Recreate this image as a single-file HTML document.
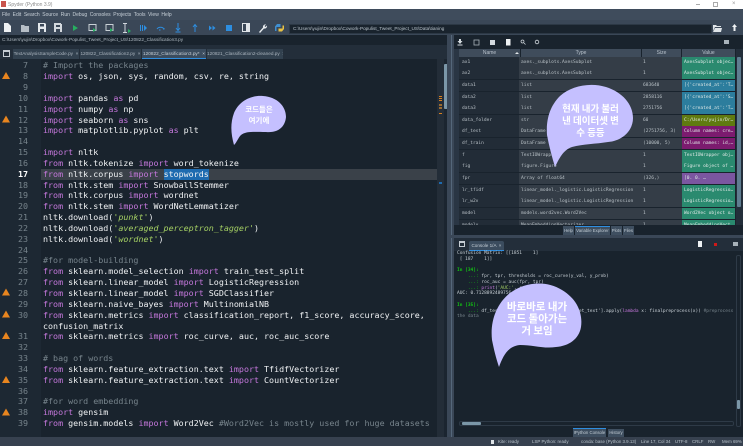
<!DOCTYPE html>
<html><head><meta charset="utf-8">
<style>
html,body{margin:0;padding:0;width:743px;height:446px;overflow:hidden;background:#37414f}
body{position:relative;font-family:"Liberation Sans","Noto Sans CJK KR",sans-serif;filter:blur(.3px)}
.a{position:absolute}
pre{margin:0;font-family:"DejaVu Sans Mono",monospace}
#code{position:absolute;left:43px;top:60.3px;font-size:8.35px;line-height:10.85px;color:#f0f2f4;white-space:pre}
#nums{position:absolute;left:10px;width:18px;top:60.3px;font-size:8.35px;line-height:10.85px;color:#77848c;text-align:right}
i.k{font-style:normal;color:#c678dd}
i.c{font-style:normal;color:#77848c}
i.s{color:#a4cf63}
.ui{position:absolute;font-size:5.2px;color:#c8d0d8;white-space:nowrap;line-height:8px}
.tab{position:absolute;top:49px;height:10px;background:#32414f;color:#aab4be;font-size:4.7px;line-height:10px;white-space:nowrap;text-align:center;overflow:hidden}
.row{position:absolute;left:459px;width:276px;height:11px;font-family:"DejaVu Sans Mono",monospace;font-size:4.55px;line-height:11px;color:#b8c0c6;background:#343d47}
.row span{position:absolute;top:0;white-space:nowrap;overflow:hidden;height:11px}
.n{left:0;width:60px;background:#222c37;padding-left:3px;box-sizing:border-box}
.t{left:62px;width:120px}
.z{left:184px}
.v{left:223px;width:53px;padding-left:2px;box-sizing:border-box;color:#dfe8e6}
.hd{position:absolute;top:49px;height:8px;background:#3f4c5b;color:#b8c2cc;font-size:5px;line-height:8px;text-align:center}
.con{position:absolute;left:457px;font-family:"DejaVu Sans Mono",monospace;font-size:4.5px;line-height:6px;color:#c8d0d6;white-space:pre}
.bt{position:absolute;height:9px;background:#3f4f60;color:#c2ccd4;font-size:4.3px;line-height:9px;text-align:center;white-space:nowrap;overflow:hidden}
.kr{position:absolute;color:#fff;font-weight:bold;text-align:center;white-space:nowrap;font-family:"Noto Sans CJK KR",sans-serif}
.st{position:absolute;top:438px;color:#b8c2ca;font-size:4.4px;line-height:8px;white-space:nowrap}
</style></head><body>

<!-- title bar -->
<div class="a" style="left:0;top:0;width:743px;height:9px;background:#fff"></div>
<div class="a" style="left:1px;top:1px;width:5px;height:6px;background:#c9544c"></div>
<div class="ui" style="left:8px;top:1px;color:#8c8c8c;font-size:5px">Spyder (Python 3.9)</div>
<div class="a" style="left:696px;top:4px;width:4px;height:1px;background:#aaa"></div>
<div class="a" style="left:713px;top:2px;width:3px;height:3px;border:1px solid #aaa"></div>
<div class="ui" style="left:732px;top:0;color:#999;font-size:6px">×</div>

<!-- menu -->
<div class="a" style="left:0;top:9px;width:743px;height:11px;background:#3f4c5c"></div>
<div class="ui" style="left:2px;top:11px;word-spacing:1.2px;color:#c8d0d8;font-size:5px">File Edit Search Source Run Debug Consoles Projects Tools View Help</div>

<!-- toolbar -->
<div class="a" style="left:0;top:20px;width:743px;height:15px;background:#3a4757"></div>
<svg class="a" style="left:0;top:20px" width="290" height="15" viewBox="0 0 290 15">
<path d="M4 3h4l3 3v6H4z" fill="#eef1f3"/>
<path d="M21 5h3l1 1h4v6h-8z" fill="#b6bec6"/>
<path d="M38 3h7l1 1v8h-8z" fill="#e4e8ec"/><rect x="40" y="4" width="4" height="2.5" fill="#3a4757"/><rect x="40" y="9" width="4" height="3" fill="#3a4757"/>
<path d="M54 3h7v1h1v8h-8z" fill="#d4d9de"/><rect x="56" y="5" width="4" height="2" fill="#3a4757"/><rect x="56" y="9" width="4" height="3" fill="#3a4757"/>
<path d="M73 5l5 3-5 3z" fill="#27ae60"/>
<rect x="89" y="4.5" width="7" height="6" fill="none" stroke="#c8d0d6" stroke-width="1"/><path d="M93 8l3 2-3 2z" fill="#27ae60"/>
<rect x="106" y="4.5" width="7" height="6" fill="none" stroke="#c8d0d6" stroke-width="1"/><path d="M110 8l3 2-3 2z" fill="#27ae60"/>
<path d="M123 3.500h4M125 3.500v9M123 12.500h4" stroke="#d0d6dc" fill="none"/><path d="M128 9l3 2-3 2z" fill="#27ae60"/>
<rect x="140" y="5" width="1" height="6" fill="#2d8ee0"/><rect x="142" y="5" width="1" height="6" fill="#2d8ee0"/><path d="M144 5l3 3-3 3z" fill="#2d8ee0"/>
<path d="M157 9a4 3.500 0 0 1 7 0" stroke="#2d8ee0" fill="none"/><path d="M163 10l2-1-1-1z" fill="#2d8ee0"/><rect x="159" y="9.500" width="1.500" height="1" fill="#2d8ee0"/>
<path d="M178 3v7M176 8l2 2.500 2-2.500M175.500 12h5" stroke="#2d8ee0" fill="none"/>
<path d="M195 12V5M193 7l2-2.500 2 2.500" stroke="#2d8ee0" fill="none"/>
<path d="M209 5.500l3 2.500-3 2.500zM212.500 5.500l3 2.500-3 2.500z" fill="#2d8ee0"/>
<rect x="226" y="5" width="6" height="6" fill="#2d8ee0"/>
<rect x="242" y="3" width="8" height="9" fill="#e0e4e8"/><rect x="243" y="4" width="3" height="7" fill="#3a4757"/>
<path d="M259 12l4-4.500a2.500 2.500 0 0 1 3-3l-1.500 1.500 1 1 1.500-1.500a2.500 2.500 0 0 1-3 3l-4 4.500z" fill="#e8ecef"/>
<path d="M277 4h3.500v3h-4v4h-1.500V6.500z" fill="#3f8fd0"/><path d="M282 11.500h-3.500v-3h4v-3h1.500V9z" fill="#e8c244"/>
</svg>
<div class="a" style="left:289px;top:24px;width:421px;height:8px;background:#19232d;border:1px solid #2c3845;box-sizing:content-box"></div>
<div class="ui" style="left:293px;top:24.500px;color:#b8c2ca;font-size:4.7px">C:\Users\yujin\Dropbox\Cowork-Populist_Tweet_Project_US\Data\tianing</div>
<svg class="a" style="left:712px;top:22px" width="30" height="12" viewBox="0 0 30 12">
<path d="M1 3h3l1 1h4v1H3L1 9zM3 6h7l-1 4H1z" fill="#dfe4e8"/>
<path d="M21.500 9V5H20l2.500-3L25 5h-1.500v4z" fill="#eef1f3"/>
</svg>

<!-- file path -->
<div class="a" style="left:0;top:35px;width:447px;height:9.500px;background:#19232d"></div>
<div class="ui" style="left:2px;top:36px;color:#aeb8c0;font-size:4.7px">C:\Users\yujin\Dropbox\Cowork-Populist_Tweet_Project_US\120822_Classification3.py</div>

<!-- tab bar -->
<div class="a" style="left:0;top:44.500px;width:447px;height:14px;background:#232e3a"></div>
<div class="a" style="left:3px;top:50px;width:5px;height:4px;border:1px solid #c5ccd3;border-top-width:2px"></div>
<div class="tab" style="left:13px;width:66px">TextAnalysisSampleCode.py &nbsp;×</div>
<div class="tab" style="left:80px;width:61px">120822_Classification2.py &nbsp;×</div>
<div class="tab" style="left:142px;width:64px;background:#3b4c5e;border-bottom:1px solid #2f8ee0;height:9px;color:#c5ced6">120822_Classification3.py* &nbsp;×</div>
<div class="tab" style="left:207px;width:76px">120821_Classification2-cleaned.py &nbsp;×</div>

<!-- editor -->
<div class="a" style="left:0;top:59px;width:447px;height:378px;background:#19232d"></div>
<div class="a" style="left:0;top:59px;width:41px;height:378px;background:#1d2833"></div>
<div class="a" style="left:41px;top:168.700px;width:396px;height:11.300px;background:#3a4149"></div>
<div class="a" style="left:163.500px;top:169px;width:45px;height:11px;background:#1e6bb0"></div>
<div class="a" style="left:437px;top:59px;width:10px;height:378px;background:#232d38"></div>
<div class="a" style="left:444px;top:59px;width:3px;height:378px;background:#1b2530"></div>
<div class="a" style="left:444px;top:64px;width:4px;height:45px;background:#7b97a8;border-radius:1px"></div>
<div class="a" style="left:439px;top:96px;width:3px;height:1px;background:#d9801f"></div>
<div class="a" style="left:439px;top:98px;width:3px;height:1px;background:#d9801f"></div>
<div class="a" style="left:439px;top:100px;width:3px;height:1px;background:#d9801f"></div>
<div class="a" style="left:439px;top:104px;width:3px;height:2px;background:#9a6a30"></div>
<div class="a" style="left:439px;top:107px;width:3px;height:2px;background:#9a6a30"></div>
<div class="a" style="left:439px;top:113px;width:3px;height:1px;background:#d9801f"></div>
<div class="a" style="left:439px;top:182px;width:3px;height:2px;background:#1e6bb0"></div>

<pre id="nums">7
8
9
10
11
12
13
14
15
16
<b style="color:#fff">17</b>
18
19
20
21
22
23
24
25
26
27
28
29
30

31
32
33
34
35
36
37
38
39</pre>

<svg class="a" style="left:0;top:59px" width="12" height="378" viewBox="0 0 12 378" fill="#e8851f">
<path d="M6 13l4 7H2z"/><path d="M6 56.500l4 7H2z"/><path d="M6 229.500l4 7H2z"/><path d="M6 251.500l4 7H2z"/><path d="M6 273l4 7H2z"/><path d="M6 317l4 7H2z"/><path d="M6 349.500l4 7H2z"/>
</svg>

<pre id="code"><i class="c"># Import the packages</i>
<i class="k">import</i> os, json, sys, random, csv, re, string

<i class="k">import</i> pandas <i class="k">as</i> pd
<i class="k">import</i> numpy <i class="k">as</i> np
<i class="k">import</i> seaborn <i class="k">as</i> sns
<i class="k">import</i> matplotlib.pyplot <i class="k">as</i> plt

<i class="k">import</i> nltk
<i class="k">from</i> nltk.tokenize <i class="k">import</i> word_tokenize
<i class="k">from</i> nltk.corpus <i class="k">import</i> stopwords
<i class="k">from</i> nltk.stem <i class="k">import</i> SnowballStemmer
<i class="k">from</i> nltk.corpus <i class="k">import</i> wordnet
<i class="k">from</i> nltk.stem <i class="k">import</i> WordNetLemmatizer
nltk.download(<i class="s">'punkt'</i>)
nltk.download(<i class="s">'averaged_perceptron_tagger'</i>)
nltk.download(<i class="s">'wordnet'</i>)

<i class="c">#for model-building</i>
<i class="k">from</i> sklearn.model_selection <i class="k">import</i> train_test_split
<i class="k">from</i> sklearn.linear_model <i class="k">import</i> LogisticRegression
<i class="k">from</i> sklearn.linear_model <i class="k">import</i> SGDClassifier
<i class="k">from</i> sklearn.naive_bayes <i class="k">import</i> MultinomialNB
<i class="k">from</i> sklearn.metrics <i class="k">import</i> classification_report, f1_score, accuracy_score,
confusion_matrix
<i class="k">from</i> sklearn.metrics <i class="k">import</i> roc_curve, auc, roc_auc_score

<i class="c"># bag of words</i>
<i class="k">from</i> sklearn.feature_extraction.text <i class="k">import</i> TfidfVectorizer
<i class="k">from</i> sklearn.feature_extraction.text <i class="k">import</i> CountVectorizer

<i class="c">#for word embedding</i>
<i class="k">import</i> gensim
<i class="k">from</i> gensim.models <i class="k">import</i> Word2Vec <i class="c">#Word2Vec is mostly used for huge datasets</i></pre>

<!-- right column gutter -->
<div class="a" style="left:447px;top:35px;width:7px;height:402px;background:#3a4757"></div>
<div class="a" style="left:451px;top:35px;width:1px;height:402px;background:#55677a"></div>
<div class="a" style="left:447px;top:235px;width:296px;height:3px;background:#3a4757"></div>

<!-- variable explorer -->
<div class="a" style="left:454px;top:35px;width:289px;height:200px;background:#19232d"></div>
<svg class="a" style="left:454px;top:37px" width="289" height="10" viewBox="0 0 289 10" fill="#d4dadf">
<path d="M5 2h2v2h1.500L6 7 3.500 4H5zM3.500 7.500h5v1h-5z"/>
<rect x="20" y="3" width="5" height="5" fill="none" stroke="#a8b2ba" stroke-width=".8"/>
<rect x="36" y="3" width="5" height="5"/>
<rect x="52" y="2" width="4.500" height="6.500" fill="#eef1f3"/>
<circle cx="68.500" cy="4.500" r="1.500" fill="none" stroke="#d4dadf" stroke-width=".7"/><path d="M70 6l1.500 1.500" stroke="#d4dadf" stroke-width=".7"/>
<circle cx="83" cy="5" r="1.800" fill="none" stroke="#d4dadf" stroke-width=".8"/>
<rect x="270" y="3" width="5" height="4" fill="#a8b2ba"/>
</svg>

<div class="a" style="left:454px;top:49px;width:5px;height:177px;background:#2a3644"></div>
<div class="hd" style="left:459px;width:61px">Name</div>
<div class="hd" style="left:521px;width:120px">Type</div>
<div class="hd" style="left:642px;width:39px">Size</div>
<div class="hd" style="left:682px;width:53px">Value</div>
<div class="a" style="left:515px;top:52px;width:0;height:0;border:2px solid transparent;border-bottom:2px solid #dfe4e8;border-top:0"></div>

<div class="row" style="top:56.500px"><span class="n">ax1</span><span class="t">axes._subplots.AxesSubplot</span><span class="z">1</span><span class="v" style="background:#2a8a6f">AxesSubplot objec…</span></div>
<div class="row" style="top:68.200px"><span class="n">ax2</span><span class="t">axes._subplots.AxesSubplot</span><span class="z">1</span><span class="v" style="background:#2a8a6f">AxesSubplot objec…</span></div>
<div class="row" style="top:79.800px"><span class="n">data1</span><span class="t">list</span><span class="z">683640</span><span class="v" style="background:#2c7d9d">[{'created_at':'T…</span></div>
<div class="row" style="top:91.500px"><span class="n">data2</span><span class="t">list</span><span class="z">2858116</span><span class="v" style="background:#2c7d9d">[{'created_at':'S…</span></div>
<div class="row" style="top:103.100px"><span class="n">data3</span><span class="t">list</span><span class="z">2751756</span><span class="v" style="background:#2c7d9d">[{'created_at':'T…</span></div>
<div class="row" style="top:114.800px"><span class="n">data_folder</span><span class="t">str</span><span class="z">60</span><span class="v" style="background:#5f7a10">C:/Users/yujin/Dr…</span></div>
<div class="row" style="top:126.400px"><span class="n">df_test</span><span class="t">DataFrame</span><span class="z">(2751756, 3)</span><span class="v" style="background:#7c1b6f">Column names: cre…</span></div>
<div class="row" style="top:138.100px"><span class="n">df_train</span><span class="t">DataFrame</span><span class="z">(10000, 5)</span><span class="v" style="background:#7c1b6f">Column names: id,…</span></div>
<div class="row" style="top:149.700px"><span class="n">f</span><span class="t">TextIOWrapper</span><span class="z">1</span><span class="v" style="background:#2a8a6f">TextIOWrapper obj…</span></div>
<div class="row" style="top:161.400px"><span class="n">fig</span><span class="t">figure.Figure</span><span class="z">1</span><span class="v" style="background:#2a8a6f">Figure object of …</span></div>
<div class="row" style="top:173px"><span class="n">fpr</span><span class="t">Array of float64</span><span class="z">(326,)</span><span class="v" style="background:#7b56a0">[0.        0.    …</span></div>
<div class="row" style="top:184.700px"><span class="n">lr_tfidf</span><span class="t">linear_model._logistic.LogisticRegression</span><span class="z">1</span><span class="v" style="background:#2a8a6f">LogisticRegressio…</span></div>
<div class="row" style="top:196.300px"><span class="n">lr_w2v</span><span class="t">linear_model._logistic.LogisticRegression</span><span class="z">1</span><span class="v" style="background:#2a8a6f">LogisticRegressio…</span></div>
<div class="row" style="top:208px"><span class="n">model</span><span class="t">models.word2vec.Word2Vec</span><span class="z">1</span><span class="v" style="background:#2a8a6f">Word2Vec object o…</span></div>
<div class="row" style="top:219.600px;height:5.500px;overflow:hidden"><span class="n">modelv</span><span class="t">MeanEmbeddingVectorizer</span><span class="z">1</span><span class="v" style="background:#2a8a6f">MeanEmbeddingVect…</span></div>

<div class="a" style="left:736px;top:49px;width:7px;height:176px;background:#232e3a"></div>
<div class="a" style="left:737px;top:57px;width:4px;height:150px;background:#5f7d90;border-radius:1px"></div>

<div class="a" style="left:454px;top:225px;width:289px;height:10px;background:#19232d"></div>
<div class="bt" style="left:563px;top:226px;width:11px">Help</div>
<div class="bt" style="left:575px;top:226px;width:35px;border-top:1px solid #2f8ee0;height:8px;line-height:8px">Variable Explorer</div>
<div class="bt" style="left:611px;top:226px;width:11px">Plots</div>
<div class="bt" style="left:623px;top:226px;width:11px">Files</div>

<!-- console -->
<div class="a" style="left:454px;top:238px;width:289px;height:199px;background:#19232d"></div>
<div class="a" style="left:454px;top:238px;width:289px;height:13px;background:#232e3a"></div>
<div class="a" style="left:459px;top:241px;width:4px;height:3px;border:1px solid #c5ccd3;border-top-width:2px"></div>
<div class="a" style="left:469px;top:241px;width:35px;height:9px;background:#3b4c5e;border-bottom:1px solid #2f8ee0;border-radius:2px 2px 0 0;color:#c5ced6;font-size:4.6px;line-height:9px;text-align:center">Console 1/A &nbsp;×</div>
<div class="a" style="left:698px;top:241px;width:4px;height:6px;background:#eef1f3"></div>
<div class="a" style="left:714px;top:243px;width:3px;height:3px;background:#d01818"></div>
<div class="a" style="left:733px;top:242px;width:5px;height:4px;background:#a8b2ba"></div>

<div class="con" style="top:251px">Confusion Matrix: [[1851    1]</div>
<div class="con" style="top:257px"> [ 187    1]]</div>
<div class="con" style="top:267.700px;color:#12c712;font-weight:bold">In [34]:</div>
<div class="con" style="top:274.300px"><span style="color:#12c712">    ...: </span>fpr, tpr, thresholds = roc_curve(y_val, y_prob)</div>
<div class="con" style="top:280px"><span style="color:#12c712">    ...: </span>roc_auc = auc(fpr, tpr)</div>
<div class="con" style="top:285.700px"><span style="color:#12c712">    ...: </span><span style="color:#c678dd">print</span>(<span style="color:#a4cf63">'AUC:'</span>, roc_auc)</div>
<div class="con" style="top:291px">AUC: 0.7128892489756</div>
<div class="con" style="top:303px;color:#12c712;font-weight:bold">In [35]:</div>
<div class="con" style="top:309px"><span style="color:#12c712">    ...: </span>df_test['clean_text'] = df_test['tweet_text'].apply(<span style="color:#c678dd">lambda</span> x: finalpreprocess(x)) <span style="color:#77848c">#preprocess</span></div>
<div class="con" style="top:314.300px;color:#77848c">the data</div>

<div class="a" style="left:736px;top:255px;width:5px;height:172px;background:#19232d;border:1px solid #2e3a47;box-sizing:border-box;border-radius:2px"></div>
<div class="a" style="left:737px;top:400px;width:3px;height:9px;background:#7b97a8;border-radius:1px"></div>
<div class="a" style="left:459px;top:421px;width:275px;height:5px;border:1px solid #2e3a47;box-sizing:border-box;border-radius:2px"></div>
<div class="a" style="left:462px;top:422px;width:19px;height:3px;background:#7b97a8;border-radius:1px"></div>
<div class="bt" style="left:573px;top:428px;width:33px;border-top:1px solid #2f8ee0;height:8px;line-height:8px">IPython Console</div>
<div class="bt" style="left:608px;top:429px;width:16px;height:7.500px;line-height:8px">History</div>

<!-- status -->
<div class="a" style="left:0;top:437px;width:743px;height:9px;background:#37414f"></div>
<div class="st" style="left:498px">Kite: ready</div>
<div class="a" style="left:491px;top:439.500px;width:3px;height:4px;background:#dfe4e8"></div>
<div class="st" style="left:532px">LSP Python: ready</div>
<div class="st" style="left:581px">conda: base (Python 3.9.13)</div>
<div class="st" style="left:641px">Line 17, Col 34</div>
<div class="st" style="left:675px">UTF-8</div>
<div class="st" style="left:692px">CRLF</div>
<div class="st" style="left:708px">RW</div>
<div class="st" style="left:722px">Mem 69%</div>

<!-- bubbles -->
<svg class="a" style="left:0;top:0" width="743" height="446" viewBox="0 0 743 446">
<path fill="#c5c0ff" d="M234 145C231 134 230 124 234 113C239 101 251 95 263 96C277 97 286 106 286 117C285 128 277 133 266 132C254 132 246 131 241 135C238 138 237 142 234 145Z"/>
<path fill="#c5c0ff" d="M555 167C552 157 549 146 547 135C546 121 549 107 560 96C571 86 590 82 606 87C622 92 633 104 633 118C633 131 622 141 608 142C596 144 583 144 572 147C563 150 559 159 555 167Z"/>
<path fill="#c5c0ff" d="M499 367C496 358 494 350 492 340C490 322 496 304 510 293C525 282 546 280 562 290C577 299 583 313 581 327C579 339 569 346 556 347C544 349 533 345 520 345C508 346 503 356 499 367Z"/>
</svg>
<div class="kr" style="left:231px;top:104px;width:56px;font-size:7.500px;line-height:11px">코드들은<br>여기에</div>
<div class="kr" style="left:547px;top:102px;width:87px;font-size:9.500px;line-height:12px">현재 내가 불러<br>낸 데이터셋 변<br>수 등등</div>
<div class="kr" style="left:492px;top:301px;width:90px;font-size:10.500px;line-height:11.800px">바로바로 내가<br>코드 돌아가는<br>거 보임</div>
</body></html>
